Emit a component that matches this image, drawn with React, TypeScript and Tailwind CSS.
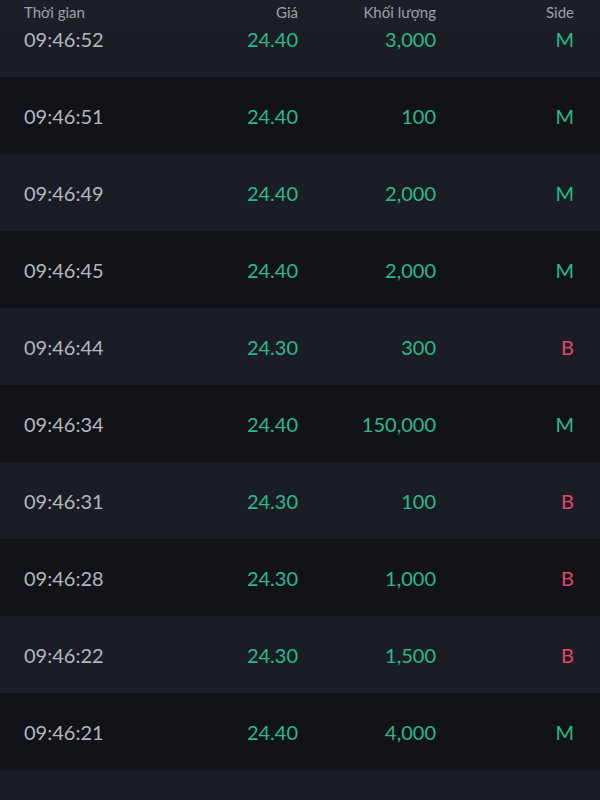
const trades = [
  { time: '09:46:52', price: '24.40', vol: '3,000', side: 'M' },
  { time: '09:46:51', price: '24.40', vol: '100', side: 'M' },
  { time: '09:46:49', price: '24.40', vol: '2,000', side: 'M' },
  { time: '09:46:45', price: '24.40', vol: '2,000', side: 'M' },
  { time: '09:46:44', price: '24.30', vol: '300', side: 'B' },
  { time: '09:46:34', price: '24.40', vol: '150,000', side: 'M' },
  { time: '09:46:31', price: '24.30', vol: '100', side: 'B' },
  { time: '09:46:28', price: '24.30', vol: '1,000', side: 'B' },
  { time: '09:46:22', price: '24.30', vol: '1,500', side: 'B' },
  { time: '09:46:21', price: '24.40', vol: '4,000', side: 'M' },
];

export default function App() {
  return (
    <div className="relative h-[800px] w-[600px] overflow-hidden bg-[#1a1d24] font-['Lato',sans-serif]">
      {/* sticky header over the scrolled list */}
      <div className="absolute inset-x-0 top-0 z-10 flex h-[30px] items-start bg-[#1c1f26] pl-6 pr-[26px] pt-[1px] text-[15px] text-[#9ca1a9]">
        <div className="flex-1">Thời gian</div>
        <div className="w-[120px] text-right">Giá</div>
        <div className="w-[138px] text-right">Khối lượng</div>
        <div className="w-[138px] text-right">Side</div>
      </div>

      <div className="flex flex-col">
        {trades.map((t, i) => (
          <div
            key={t.time}
            className={`flex h-[77px] shrink-0 items-center pl-6 pr-[26px] text-[20px] ${
              i % 2 === 0 ? 'bg-[#1a1d24]' : 'bg-[#111318]'
            }`}
          >
            <div className="flex-1 text-[#b3b7be]">{t.time}</div>
            <div className="w-[120px] text-right text-[#2bb989]">{t.price}</div>
            <div className="w-[138px] text-right text-[#2bb989]">{t.vol}</div>
            <div
              className={`w-[138px] text-right ${t.side === 'B' ? 'text-[#e2476b]' : 'text-[#2bb989]'}`}
            >
              {t.side}
            </div>
          </div>
        ))}
      </div>
    </div>
  );
}
